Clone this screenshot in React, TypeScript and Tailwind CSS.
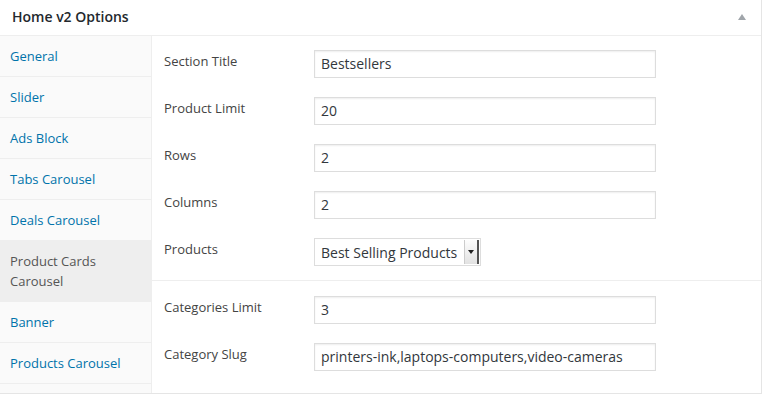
import React from 'react';

const tabs = [
  'General',
  'Slider',
  'Ads Block',
  'Tabs Carousel',
  'Deals Carousel',
  'Product Cards Carousel',
  'Banner',
  'Products Carousel',
];

const Field = ({ label, value }: { label: string; value: string }) => (
  <div className="flex items-start h-[47px]">
    <div className="w-[150px] pt-[1px] text-[13px] leading-[20px] text-[#444]">{label}</div>
    <div className="w-[342px] h-[28px] border border-[#ddd] shadow-[inset_0_1px_2px_rgba(0,0,0,0.07)] bg-white px-[6px] text-[14px] leading-[26px] text-[#32373c]">
      {value}
    </div>
  </div>
);

export default function App() {
  return (
    <div className="w-[762px] h-[395px] bg-white" style={{ fontFamily: '"Open Sans", sans-serif' }}>
      <div className="w-[762px] h-[394px] border-r border-b border-[#e5e5e5] flex flex-col">
        {/* header */}
        <div className="h-[36px] border-b border-[#eee] flex items-center justify-between pl-[12px] pr-[15px]">
          <h2 className="text-[14px] font-semibold text-[#23282d] leading-none pb-[2px]">Home v2 Options</h2>
          <svg width="8" height="6" viewBox="0 0 8 6" className="mb-[2px]">
            <polygon points="4,0 8,6 0,6" fill="#a0a5aa" />
          </svg>
        </div>

        <div className="flex flex-1">
          {/* tabs */}
          <ul className="w-[152px] bg-[#fafafa] border-r border-[#eee]">
            {tabs.map((t) => {
              const active = t === 'Product Cards Carousel';
              return (
                <li
                  key={t}
                  className={`px-[10px] py-[10px] text-[13px] leading-[20px] border-b border-[#eee] ${
                    active ? 'bg-[#eee] text-[#555] pr-[40px]' : 'text-[#0073aa]'
                  }`}
                >
                  {t}
                </li>
              );
            })}
          </ul>

          {/* content */}
          <div className="flex-1">
            <div className="pl-[12px] pt-[14px] pb-[14px] border-b border-[#eee]">
              <Field label="Section Title" value="Bestsellers" />
              <Field label="Product Limit" value="20" />
              <Field label="Rows" value="2" />
              <Field label="Columns" value="2" />
              <div className="flex items-start">
                <div className="w-[150px] pt-[1px] text-[13px] leading-[20px] text-[#444]">Products</div>
                <div className="w-[167px] h-[28px] border border-[#ddd] bg-white flex items-center text-[14px] text-[#32373c]">
                  <span className="pl-[6px] flex-1">Best Selling Products</span>
                  <span className="w-[15px] h-[24px] mr-[1px] bg-gradient-to-b from-[#fdfdfd] to-[#e2e2e2] border-l border-[#ccc] border-r-2 border-r-[#555] flex items-center justify-center">
                    <svg width="6" height="4" viewBox="0 0 6 4">
                      <polygon points="0,0 6,0 3,4" fill="#222" />
                    </svg>
                  </span>
                </div>
              </div>
            </div>
            <div className="pl-[12px] pt-[15px]">
              <Field label="Categories Limit" value="3" />
              <Field label="Category Slug" value="printers-ink,laptops-computers,video-cameras" />
            </div>
          </div>
        </div>
      </div>
    </div>
  );
}
